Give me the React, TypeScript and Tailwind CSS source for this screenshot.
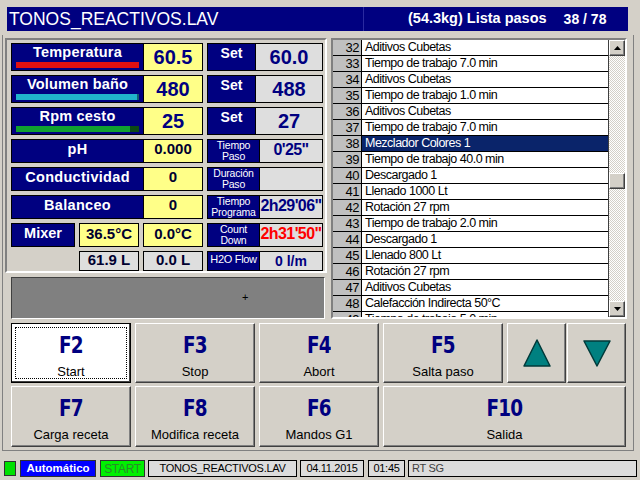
import React from "react";

const raised =
  "bg-[#d4d0c8] border border-t-white border-l-white border-r-[#404040] border-b-[#404040] shadow-[inset_-1px_-1px_0_#808080]";

const steps: [number, string][] = [
  [32, "Aditivos Cubetas"],
  [33, "Tiempo de trabajo 7.0 min"],
  [34, "Aditivos Cubetas"],
  [35, "Tiempo de trabajo 1.0 min"],
  [36, "Aditivos Cubetas"],
  [37, "Tiempo de trabajo 7.0 min"],
  [38, "Mezclador Colores 1"],
  [39, "Tiempo de trabajo 40.0 min"],
  [40, "Descargado 1"],
  [41, "Llenado 1000 Lt"],
  [42, "Rotación 27 rpm"],
  [43, "Tiempo de trabajo 2.0 min"],
  [44, "Descargado 1"],
  [45, "Llenado 800 Lt"],
  [46, "Rotación 27 rpm"],
  [47, "Aditivos Cubetas"],
  [48, "Calefacción Indirecta 50°C"],
  [49, "Tiempo de trabajo 5.0 min"],
];

function BigRow({ label, value, set, bar }: { label: string; value: string; set: string; bar: React.ReactNode }) {
  return (
    <div className="flex gap-[4px] h-[28px]">
      <div className="flex w-[192px] border border-black">
        <div className="w-[131px] bg-[#000080] flex flex-col items-center">
          <span className="text-white font-bold text-[14.5px] leading-[17px] tracking-[0.2px]">{label}</span>
          <div className="mt-[1px] w-[123px] h-[6px] flex">{bar}</div>
        </div>
        <div className="flex-1 bg-[#ffff88] border-l border-black flex items-center justify-center text-[20px] font-bold text-[#000080]">
          {value}
        </div>
      </div>
      <div className="flex w-[116px] border border-black">
        <div className="w-[47px] bg-[#000080] flex justify-center pt-[1px] text-white font-bold text-[14px] leading-[17px]">Set</div>
        <div className="flex-1 bg-[#dedede] border-l border-black flex items-center justify-center text-[20px] font-bold text-[#000080]">
          {set}
        </div>
      </div>
    </div>
  );
}

function SmallLabel({ a, b }: { a: string; b?: string }) {
  return (
    <div className="w-[51px] bg-[#000080] flex flex-col items-center justify-center text-white text-[10.5px] leading-[11px] tracking-[-0.2px]">
      <span>{a}</span>
      {b && <span>{b}</span>}
    </div>
  );
}

function MidRow({ label, value, l1, l2, right, red }: { label: string; value: string; l1: string; l2: string; right: string; red?: boolean }) {
  return (
    <div className="flex gap-[4px] h-[24px]">
      <div className="flex w-[192px] border border-black">
        <div className="w-[131px] bg-[#000080] flex items-center justify-center pb-[3px] text-white font-bold text-[14.5px] tracking-[0.3px]">
          {label}
        </div>
        <div className="flex-1 bg-[#ffff88] border-l border-black flex items-center justify-center pb-[3px] text-[15px] font-bold text-[#000030]">
          {value}
        </div>
      </div>
      <RightPair l1={l1} l2={l2} value={right} red={red} />
    </div>
  );
}

function RightPair({ l1, l2, value, red }: { l1: string; l2?: string; value: string; red?: boolean }) {
  return (
    <div className="flex w-[116px] border border-black">
      <SmallLabel a={l1} b={l2} />
      <div
        className={`flex-1 bg-[#dedede] border-l border-black flex justify-center items-center pb-[3px] text-[16px] font-bold tracking-[-0.6px] ${
          red ? "text-[#ff0000]" : "text-[#000080]"
        }`}
      >
        {value}
      </div>
    </div>
  );
}

function Cell({ children, yellow }: { children?: React.ReactNode; yellow?: boolean }) {
  return (
    <div
      className={`w-[60px] border border-black flex items-center justify-center pb-[2px] text-[15px] font-bold text-[#000030] ${
        yellow ? "bg-[#ffff88]" : "bg-[#dedede]"
      }`}
    >
      {children}
    </div>
  );
}

function LeftPanel() {
  return (
    <div className="flex flex-col gap-[4px]">
      <div className="w-[322px] h-[235px] border-2 border-t-[#808080] border-l-[#808080] border-b-white border-r-white pl-[4px] pt-[3px] flex flex-col gap-[4px]">
        <BigRow label="Temperatura" value="60.5" set="60.0" bar={<div className="flex-1 bg-[#e01010]" />} />
        <BigRow
          label="Volumen baño"
          value="480"
          set="488"
          bar={
            <>
              <div className="flex-1 bg-[#20b4cc]" />
              <div className="w-[2px] bg-[#106070]" />
            </>
          }
        />
        <BigRow
          label="Rpm cesto"
          value="25"
          set="27"
          bar={
            <>
              <div className="w-[114px] bg-[#10a030]" />
              <div className="flex-1 bg-[#0c4a14]" />
            </>
          }
        />
        <MidRow label="pH" value="0.000" l1="Tiempo" l2="Paso" right={`0'25"`} />
        <MidRow label="Conductividad" value="0" l1="Duración" l2="Paso" right="" />
        <MidRow label="Balanceo" value="0" l1="Tiempo" l2="Programa" right={`2h29'06"`} />
        <div className="flex gap-[4px] h-[24px]">
          <div className="w-[64px] border border-black bg-[#000080] flex justify-center pt-[1px] text-white font-bold text-[14.5px] leading-[17px]">
            Mixer
          </div>
          <Cell yellow>36.5°C</Cell>
          <Cell yellow>0.0°C</Cell>
          <RightPair l1="Count" l2="Down" value={`2h31'50"`} red />
        </div>
        <div className="flex gap-[4px] h-[20px]">
          <div className="w-[64px]" />
          <Cell>61.9 L</Cell>
          <Cell>0.0 L</Cell>
          <div className="flex w-[116px] border border-black">
            <div className="w-[51px] bg-[#000080] flex justify-center pt-[1px] text-white text-[11px] leading-[12px] tracking-[-0.3px]">H2O Flow</div>
            <div className="flex-1 bg-[#dedede] border-l border-black flex justify-center pt-[1px] text-[14px] font-bold text-[#000080] leading-[16px]">
              0 l/m
            </div>
          </div>
        </div>
      </div>
      <div className="relative ml-[6px] w-[314px] h-[42px] bg-[#808080] border border-t-[#404040] border-l-[#404040] border-b-white border-r-white">
        <span className="absolute left-[230px] top-[14px] text-[11px] leading-[11px] text-black">+</span>
      </div>
    </div>
  );
}

function Tri({ down }: { down?: boolean }) {
  return (
    <svg width="7" height="4" viewBox="0 0 7 4">
      <polygon points={down ? "0,0 7,0 3.5,4" : "0,4 7,4 3.5,0"} fill="#000" />
    </svg>
  );
}

function StepList() {
  return (
    <div className="w-[296px] h-[281px] border-2 border-t-[#808080] border-l-[#808080] border-b-white border-r-white flex">
      <div className="flex-1 overflow-hidden border-r border-[#404040]">
        {steps.map(([n, t]) => (
          <div key={n} className="flex h-[16px] border-b border-black text-[12.5px] leading-[15px] tracking-[-0.5px]">
            <div className="w-[29px] bg-[#c0c0c0] border-r border-black text-right pr-[2px] text-black text-[13px]">{n}</div>
            <div className={`flex-1 pl-[3px] ${n === 38 ? "bg-[#0a246a] text-white" : "bg-white text-black"}`}>{t}</div>
          </div>
        ))}
      </div>
      <div className="w-[16px] flex flex-col bg-[repeating-conic-gradient(#d4d0c8_0%_25%,#ffffff_0%_50%)] bg-[length:2px_2px]">
        <div className={`h-[16px] flex items-center justify-center ${raised}`}>
          <Tri />
        </div>
        <div className="h-[117px]" />
        <div className={`h-[16px] ${raised}`} />
        <div className="flex-1" />
        <div className={`h-[16px] flex items-center justify-center ${raised}`}>
          <Tri down />
        </div>
      </div>
    </div>
  );
}

function FKey({ k, label, className, focus }: { k: string; label: string; className: string; focus?: boolean }) {
  return (
    <div
      className={`relative flex flex-col items-center ${className} ${
        focus ? "bg-white border border-black shadow-[inset_-1px_-1px_0_#404040]" : raised
      }`}
    >
      {focus && <div className="absolute inset-[3px] border border-dotted border-black" />}
      <span className="mt-[9px] inline-block scale-x-[0.8] font-['DejaVu_Sans',sans-serif] text-[23px] leading-[25px] font-bold tracking-[-1px] text-[#000080]">
        {k}
      </span>
      <span className="mt-[6px] text-[13px] leading-[15px] text-black">{label}</span>
    </div>
  );
}

function ArrowKey({ down, className }: { down?: boolean; className: string }) {
  return (
    <div className={`flex items-center justify-center ${className} ${raised}`}>
      <svg width="30" height="30" viewBox="0 0 30 30">
        <polygon
          points={down ? "2,3 28,3 15,28" : "15,2 28,28 2,28"}
          fill="#008080"
          stroke="#003a3a"
          strokeWidth="1.5"
          strokeLinejoin="round"
        />
      </svg>
    </div>
  );
}

function StatusBar() {
  return (
    <div className="mt-[8px] h-[19px] flex items-center pl-[4px] text-[11px] tracking-[-0.3px]">
      <div className="w-[12px] h-[15px] bg-[#00e000] border border-[#303030]" />
      <div className="ml-[4px] w-[76px] h-[17px] bg-[#0000ff] border border-[#303030] flex items-center justify-center text-white font-bold text-[11.5px] tracking-[0px]">
        Automático
      </div>
      <div className="ml-[4px] w-[45px] h-[17px] bg-[#00f000] border border-[#303030] flex items-center justify-center text-[#2a8a2a] text-[12px]">
        START
      </div>
      <div className="ml-[3px] w-[149px] h-[17px] border border-black bg-[#dcdcdc] flex items-center justify-center text-black">
        TONOS_REACTIVOS.LAV
      </div>
      <div className="ml-[3px] w-[64px] h-[17px] border border-black bg-[#dcdcdc] flex items-center justify-center text-black">
        04.11.2015
      </div>
      <div className="ml-[4px] w-[37px] h-[17px] border border-black bg-[#dcdcdc] flex items-center justify-center text-black">
        01:45
      </div>
      <div className="ml-[3px] w-[229px] h-[17px] border border-black bg-[#dcdcdc] flex items-center pl-[3px] text-[#404040]">
        RT SG
      </div>
    </div>
  );
}

export default function App() {
  return (
    <div className="w-[640px] h-[480px] bg-[#d4d0c8] overflow-hidden flex flex-col font-['Liberation_Sans',Arial,sans-serif]">
      <div className="mt-[7px] ml-[7px] w-[621px] h-[24px] bg-[#000080] flex text-white">
        <div className="w-[356px] flex items-center pl-[2px] text-[17.5px]">TONOS_REACTIVOS.LAV</div>
        <div className="flex-1 border-l border-[#2a2aa0] flex items-center font-bold">
          <span className="ml-[44px] text-[14.5px]">(54.3kg) Lista pasos</span>
          <span className="ml-[17px] text-[14px]">38 / 78</span>
        </div>
      </div>
      <div className="mt-[4px] ml-[2px] w-[632px] h-[416px] border-x border-b border-[#808080] pl-[2px] pt-[3px] flex flex-col">
        <div className="flex gap-[4px] h-[281px]">
          <LeftPanel />
          <StepList />
        </div>
        <div className="mt-[4px] pl-[6px] flex flex-col gap-[3px]">
          <div className="flex h-[60px]">
            <FKey k="F2" label="Start" focus className="w-[120px]" />
            <FKey k="F3" label="Stop" className="ml-[4px] w-[120px]" />
            <FKey k="F4" label="Abort" className="ml-[4px] w-[120px]" />
            <FKey k="F5" label="Salta paso" className="ml-[4px] w-[120px]" />
            <ArrowKey className="ml-[4px] w-[59px]" />
            <ArrowKey down className="ml-[1px] w-[59px]" />
          </div>
          <div className="flex h-[61px]">
            <FKey k="F7" label="Carga receta" className="w-[120px]" />
            <FKey k="F8" label="Modifica receta" className="ml-[4px] w-[120px]" />
            <FKey k="F6" label="Mandos G1" className="ml-[4px] w-[120px]" />
            <FKey k="F10" label="Salida" className="ml-[4px] w-[243px]" />
          </div>
        </div>
      </div>
      <StatusBar />
    </div>
  );
}
